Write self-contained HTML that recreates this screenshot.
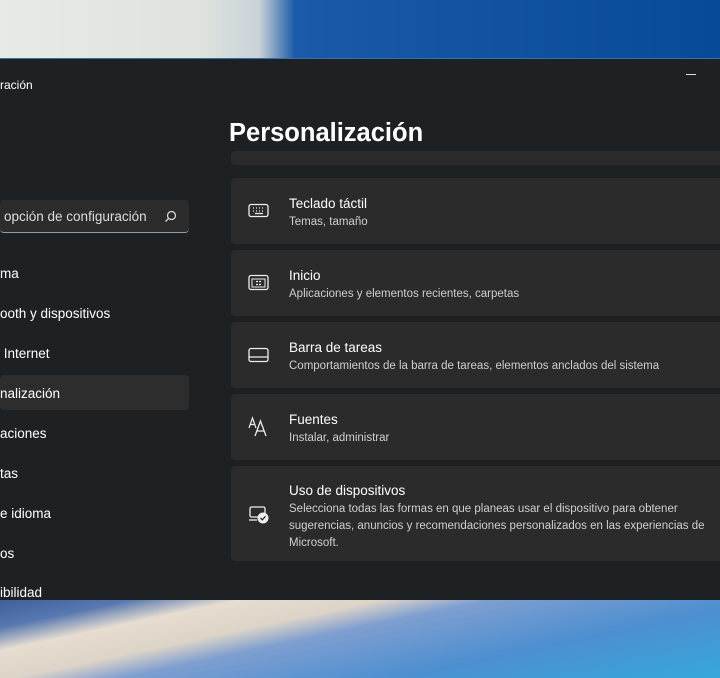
<!DOCTYPE html>
<html><head><meta charset="utf-8"><style>
*{margin:0;padding:0;box-sizing:border-box}
body{width:720px;height:678px;overflow:hidden;position:relative;font-family:"Liberation Sans",sans-serif;color:#fff;background:#0a4d98}
.top{position:absolute;left:0;top:0;width:720px;height:58px;background:linear-gradient(90deg,#e6ebe6 0%,#dfe3de 28%,#c8d2d8 36%,#1a5aa8 41%,#064a98 100%)}
.bot{position:absolute;left:0;top:600px;width:720px;height:78px;background:linear-gradient(168deg,#3e5f9a 0%,#5878b0 12%,#e6ddd0 22%,#ddd4c8 35%,#7e9ed0 45%,#4d8fd0 70%,#35a7dc 100%)}
.win{position:absolute;left:0;top:58px;width:720px;height:542px;background:#1e2124;border-top:1px solid #3a6ea5}
.t{position:absolute;white-space:nowrap}
.card{position:absolute;left:231px;width:500px;background:#2b2b2b;border-radius:4px}
.ct{position:absolute;left:58px;font-size:13.5px;color:#fff}
.cs{position:absolute;left:58px;font-size:11.5px;color:#cfcfcf;line-height:17px}
.ic{position:absolute;left:17px}
.nav{position:absolute;left:0;font-size:13.5px;color:#fff}
</style></head><body>
<div class="top"></div>
<div class="bot"></div>
<div class="win">
<div class="t" style="left:0;top:19px;font-size:12px">ración</div>
<div class="t" style="left:686px;top:15px;width:10px;height:1px;background:#ddd"></div>
<div class="t" style="left:229px;top:60px;font-size:25.5px;font-weight:bold">Personalización</div>
<div style="position:absolute;left:0;top:141px;width:189px;height:33px;background:#2c2c2c;border-radius:4px;border-bottom:1px solid #9a9a9a"></div>
<div class="t" style="left:4px;top:150px;font-size:13.5px;color:#ddd">opción de configuración</div>
<svg style="position:absolute;left:164px;top:151px" width="13" height="13" viewBox="0 0 13 13"><circle cx="7.5" cy="5.5" r="4" fill="none" stroke="#ddd" stroke-width="1.2"/><path d="M4.6 8.4L1.5 11.5" stroke="#ddd" stroke-width="1.3"/></svg>
<div style="position:absolute;left:0;top:316px;width:189px;height:35px;background:#2d2d2d;border-radius:4px"></div>
<div class="nav" style="top:207px">ma</div>
<div class="nav" style="top:247px">ooth y dispositivos</div>
<div class="nav" style="top:287px">&nbsp;Internet</div>
<div class="nav" style="top:327px">nalización</div>
<div class="nav" style="top:367px">aciones</div>
<div class="nav" style="top:407px">tas</div>
<div class="nav" style="top:447px">e idioma</div>
<div class="nav" style="top:487px">os</div>
<div class="nav" style="top:526px">ibilidad</div>

<div class="card" style="top:92px;height:14px"></div>
<div class="card" style="top:119px;height:66px"><svg class="ic" style="top:25px" width="22" height="16" viewBox="0 0 22 16"><rect x="1" y="1.5" width="19" height="12" rx="2" fill="none" stroke="#eee" stroke-width="1.3"/><path d="M5 5h1M8 5h1M11 5h1M14 5h1M5 8h1M8 8h1M11 8h1M14 8h1M7 10.5h8" stroke="#eee" stroke-width="1.2"/></svg><div class="ct" style="top:18px">Teclado táctil</div><div class="cs" style="top:36px">Temas, tamaño</div></div>
<div class="card" style="top:191px;height:66px"><svg class="ic" style="top:24px" width="22" height="18" viewBox="0 0 22 18"><rect x="1" y="1.5" width="19" height="14" rx="2" fill="none" stroke="#eee" stroke-width="1.3"/><rect x="4" y="5" width="13" height="8" fill="none" stroke="#eee" stroke-width="1"/><path d="M8 7.5h2M11 7.5h2M8 10.5h2M11 10.5h2" stroke="#eee" stroke-width="1.3"/></svg><div class="ct" style="top:18px">Inicio</div><div class="cs" style="top:36px">Aplicaciones y elementos recientes, carpetas</div></div>
<div class="card" style="top:263px;height:66px"><svg class="ic" style="top:25px" width="22" height="16" viewBox="0 0 22 16"><rect x="1" y="1.5" width="19" height="13" rx="2" fill="none" stroke="#eee" stroke-width="1.3"/><path d="M1 10h19" stroke="#eee" stroke-width="1.2"/></svg><div class="ct" style="top:18px">Barra de tareas</div><div class="cs" style="top:36px">Comportamientos de la barra de tareas, elementos anclados del sistema</div></div>
<div class="card" style="top:335px;height:66px"><svg class="ic" style="top:22px" width="24" height="22" viewBox="0 0 24 22"><path d="M1 12L4.5 2 8 12M2.2 8.5h4.6" fill="none" stroke="#eee" stroke-width="1.2"/><path d="M7 20L12.5 5 18 20M8.8 15h7.4" fill="none" stroke="#eee" stroke-width="1.3"/></svg><div class="ct" style="top:18px">Fuentes</div><div class="cs" style="top:36px">Instalar, administrar</div></div>
<div class="card" style="top:407px;height:95px"><svg class="ic" style="top:39px" width="24" height="20" viewBox="0 0 24 20"><rect x="2" y="2" width="15" height="10" rx="1.5" fill="none" stroke="#eee" stroke-width="1.3"/><path d="M1 15h8" stroke="#eee" stroke-width="1.3"/><circle cx="15" cy="13" r="5.5" fill="#eee"/><path d="M12.5 13l1.8 1.8 3.2-3.5" fill="none" stroke="#2b2b2b" stroke-width="1.3"/></svg><div class="ct" style="top:17px">Uso de dispositivos</div><div class="cs" style="top:35px">Selecciona todas las formas en que planeas usar el dispositivo para obtener<br>sugerencias, anuncios y recomendaciones personalizados en las experiencias de<br>Microsoft.</div></div>
</div>
</body></html>
